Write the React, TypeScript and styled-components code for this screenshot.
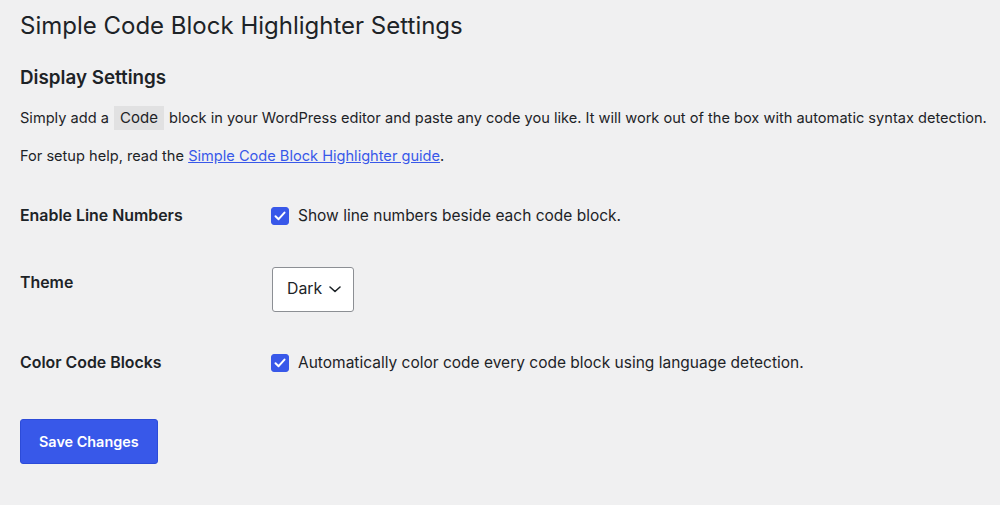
import React, { useState } from 'react';
import styled, { createGlobalStyle } from 'styled-components';

const GlobalStyle = createGlobalStyle`
  html, body {
    margin: 0;
    padding: 0;
    background: #f0f0f1;
  }
  body {
    font-family: Inter, "Noto Sans", "Liberation Sans", sans-serif;
    color: #1d2327;
    font-size: 15px;
  }
`;

const Wrap = styled.div`
  padding: 11px 20px 40px;
`;

const Title = styled.h1`
  margin: 0;
  font-size: 24px;
  font-weight: 400;
  line-height: 30px;
`;

const SectionTitle = styled.h2`
  margin: 25px 0 16px;
  font-size: 18.8px;
  font-weight: 600;
  line-height: 24px;
`;

const Para = styled.p`
  margin: 0 0 14px;
  font-size: 14.6px;
  line-height: 24px;
  white-space: nowrap;
`;

const InlineCode = styled.code`
  display: inline-block;
  font-family: inherit;
  font-size: 15px;
  line-height: 24px;
  background: rgba(0, 0, 0, 0.06);
  padding: 0 6px;
  margin: 0 1px;
  vertical-align: top;
`;

const Link = styled.a`
  color: #3858e9;
  text-decoration: underline;
`;

const FormTable = styled.div`
  margin-top: 0;
`;

const Row = styled.div`
  display: grid;
  grid-template-columns: 251px 1fr;
  align-items: start;
`;

const Label = styled.div`
  padding: 22.5px 0;
  font-size: 15.9px;
  font-weight: 600;
  line-height: 22px;
`;

const Control = styled.div`
  padding: 17.5px 0;
`;

const CheckLine = styled.label`
  display: flex;
  align-items: center;
  gap: 9px;
  padding: 5px 0;
  font-size: 15.5px;
  line-height: 22px;
  cursor: pointer;
`;

const Box = styled.span<{ checked: boolean }>`
  width: 18px;
  height: 18px;
  border-radius: 3px;
  box-sizing: border-box;
  border: 1px solid ${p => (p.checked ? '#3858e9' : '#8c8f94')};
  background: ${p => (p.checked ? '#3858e9' : '#fff')};
  display: flex;
  align-items: center;
  justify-content: center;
  flex-shrink: 0;
`;

const Select = styled.button`
  display: flex;
  align-items: center;
  gap: 6px;
  height: 45px;
  padding: 0 11px 0 14px;
  margin-left: 1px;
  background: #fff;
  border: 1px solid #8c8f94;
  border-radius: 3px;
  font: inherit;
  font-size: 15.8px;
  color: #1d2327;
  line-height: 22px;
  cursor: pointer;
`;

const SaveButton = styled.button`
  margin-top: 23px;
  height: 45px;
  padding: 0 18px;
  background: #3858e9;
  border: 1px solid #2c4bd8;
  border-radius: 3px;
  color: #fff;
  font: inherit;
  font-size: 14.4px;
  font-weight: 600;
  cursor: pointer;
`;

const Checkbox: React.FC<{ checked: boolean; onToggle: () => void; text: string }> = ({
  checked,
  onToggle,
  text,
}) => (
  <CheckLine onClick={onToggle}>
    <Box checked={checked}>
      {checked && (
        <svg width="12" height="10" viewBox="0 0 12 10" fill="none">
          <path d="M1.5 5.2 L4.6 8.2 L10.5 1.6" stroke="#fff" strokeWidth="2" strokeLinecap="round" strokeLinejoin="round" />
        </svg>
      )}
    </Box>
    {text}
  </CheckLine>
);

export default function App() {
  const [lineNumbers, setLineNumbers] = useState(true);
  const [colorCode, setColorCode] = useState(true);

  return (
    <>
      <GlobalStyle />
      <Wrap>
        <Title>Simple Code Block Highlighter Settings</Title>
        <SectionTitle>Display Settings</SectionTitle>
        <Para>
          Simply add a <InlineCode>Code</InlineCode> block in your WordPress editor and paste any code you like. It will
          work out of the box with automatic syntax detection.
        </Para>
        <Para>
          For setup help, read the <Link href="#">Simple Code Block Highlighter guide</Link>.
        </Para>
        <FormTable>
          <Row>
            <Label>Enable Line Numbers</Label>
            <Control>
              <Checkbox
                checked={lineNumbers}
                onToggle={() => setLineNumbers(!lineNumbers)}
                text="Show line numbers beside each code block."
              />
            </Control>
          </Row>
          <Row>
            <Label>Theme</Label>
            <Control>
              <Select type="button">
                Dark
                <svg width="14" height="14" viewBox="0 0 14 14" fill="none">
                  <path d="M2 5 L7 9.5 L12 5" stroke="#1d2327" strokeWidth="1.6" strokeLinecap="round" strokeLinejoin="round" />
                </svg>
              </Select>
            </Control>
          </Row>
          <Row>
            <Label>Color Code Blocks</Label>
            <Control>
              <Checkbox
                checked={colorCode}
                onToggle={() => setColorCode(!colorCode)}
                text="Automatically color code every code block using language detection."
              />
            </Control>
          </Row>
        </FormTable>
        <SaveButton type="button">Save Changes</SaveButton>
      </Wrap>
    </>
  );
}
